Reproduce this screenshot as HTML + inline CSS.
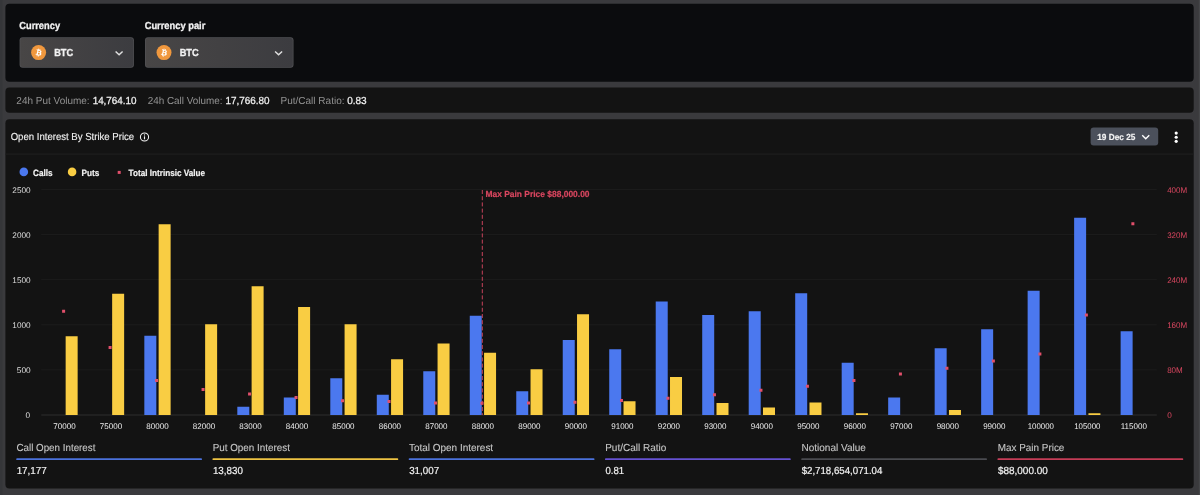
<!DOCTYPE html>
<html><head><meta charset="utf-8"><title>Open Interest By Strike Price</title>
<style>
html,body{margin:0;padding:0;}
body{width:1200px;height:495px;background:#3a3a3d;overflow:hidden;position:relative;font-family:"Liberation Sans",sans-serif;color:#fff;}
#chart{position:absolute;left:0;top:0;}
#txt{position:absolute;left:0;top:0;will-change:transform;text-rendering:geometricPrecision;font-family:"Liberation Sans",sans-serif;}
</style></head><body>
<svg id="bgs" width="1200" height="495" viewBox="0 0 1200 495" style="position:absolute;left:0;top:0">
<defs><linearGradient id="sg" x1="0" y1="0" x2="1" y2="0"><stop offset="0" stop-color="#484646"/><stop offset="1" stop-color="#3c3c40"/></linearGradient></defs>
<rect x="0" y="0" width="2.5" height="495" fill="#353639"/><rect x="1198.8" y="0" width="1.2" height="495" fill="#454649"/>
<rect x="5.4" y="3.7" width="1188.3" height="78" rx="4" fill="#0b0c0e"/>
<rect x="5.4" y="87.6" width="1188.3" height="25.1" rx="4" fill="#131313"/>
<rect x="5.4" y="119.15" width="1188.3" height="369.25" rx="4" fill="#131313"/>
<rect x="5.4" y="153.55" width="1188.3" height="1" fill="#212121"/>
<rect x="19.6" y="37.3" width="114.3" height="30.5" rx="3" fill="#525255"/>
<rect x="20.3" y="38.0" width="112.89999999999999" height="29.1" rx="2.4" fill="url(#sg)"/>
<rect x="145.0" y="37.3" width="148.5" height="30.5" rx="3" fill="#525255"/>
<rect x="145.7" y="38.0" width="147.1" height="29.1" rx="2.4" fill="url(#sg)"/>
<rect x="1090.6" y="127.5" width="67.6" height="18.1" rx="3" fill="#4b505b"/>
<circle cx="1176.2" cy="133.1" r="1.6" fill="#fff"/>
<circle cx="1176.2" cy="137.25" r="1.6" fill="#fff"/>
<circle cx="1176.2" cy="141.3" r="1.6" fill="#fff"/>
<circle cx="23.8" cy="171.9" r="4.3" fill="#4b78ef"/>
<circle cx="72.1" cy="171.9" r="4.3" fill="#f9cd43"/>
<rect x="117.7" y="170.9" width="3" height="3" fill="#e14f6b"/>
<g transform="translate(31.10 45.10) scale(0.4688)"><circle cx="16" cy="16" r="16" fill="#f0983e"/><path fill="#fff" transform="translate(16 16) scale(0.86) translate(-16 -16)" d="M23.19 14.02c.31-2.1-1.28-3.22-3.47-3.97l.71-2.85-1.73-.43-.69 2.77c-.46-.11-.92-.22-1.39-.33l.7-2.79-1.73-.43-.71 2.85c-.38-.09-.75-.17-1.1-.26l-2.39-.6-.46 1.85s1.28.29 1.26.31c.7.18.83.64.8 1.01l-.81 3.24c.05.01.11.03.18.06l-.18-.05-1.13 4.54c-.09.21-.3.53-.79.41.02.03-1.26-.31-1.26-.31l-.86 1.98 2.25.56c.42.1.83.21 1.23.32l-.72 2.88 1.73.43.71-2.85c.47.13.93.25 1.38.36l-.71 2.84 1.73.43.72-2.88c2.96.56 5.18.33 6.11-2.34.75-2.15-.04-3.39-1.59-4.2 1.13-.26 1.98-1 2.21-2.54zm-3.96 5.55c-.53 2.15-4.16.99-5.33.7l.95-3.81c1.18.29 4.94.87 4.38 3.11zm.54-5.58c-.49 1.96-3.5.96-4.48.72l.86-3.46c.98.24 4.13.7 3.62 2.74z"/></g>
<path d="M115.60 51.40 L119.10 54.80 L122.60 51.40" fill="none" stroke="#e0e0e0" stroke-width="1.45"/>
<g transform="translate(156.50 45.10) scale(0.4688)"><circle cx="16" cy="16" r="16" fill="#f0983e"/><path fill="#fff" transform="translate(16 16) scale(0.86) translate(-16 -16)" d="M23.19 14.02c.31-2.1-1.28-3.22-3.47-3.97l.71-2.85-1.73-.43-.69 2.77c-.46-.11-.92-.22-1.39-.33l.7-2.79-1.73-.43-.71 2.85c-.38-.09-.75-.17-1.1-.26l-2.39-.6-.46 1.85s1.28.29 1.26.31c.7.18.83.64.8 1.01l-.81 3.24c.05.01.11.03.18.06l-.18-.05-1.13 4.54c-.09.21-.3.53-.79.41.02.03-1.26-.31-1.26-.31l-.86 1.98 2.25.56c.42.1.83.21 1.23.32l-.72 2.88 1.73.43.71-2.85c.47.13.93.25 1.38.36l-.71 2.84 1.73.43.72-2.88c2.96.56 5.18.33 6.11-2.34.75-2.15-.04-3.39-1.59-4.2 1.13-.26 1.98-1 2.21-2.54zm-3.96 5.55c-.53 2.15-4.16.99-5.33.7l.95-3.81c1.18.29 4.94.87 4.38 3.11zm.54-5.58c-.49 1.96-3.5.96-4.48.72l.86-3.46c.98.24 4.13.7 3.62 2.74z"/></g>
<path d="M275.10 51.40 L278.60 54.80 L282.10 51.40" fill="none" stroke="#e0e0e0" stroke-width="1.45"/>
<path d="M1142.25 135.20 L1145.75 138.70 L1149.25 135.20" fill="none" stroke="#fff" stroke-width="1.4"/>
<circle cx="144.5" cy="137" r="4.1" fill="none" stroke="#f4f4f4" stroke-width="1.05"/><rect x="143.95" y="136.3" width="1.1" height="3" fill="#f4f4f4"/><rect x="143.95" y="134.4" width="1.1" height="1.1" fill="#f4f4f4"/>
</svg>
<svg id="chart" width="1200" height="495" viewBox="0 0 1200 495">
<line x1="41.25" y1="415.00" x2="1156.8" y2="415.00" stroke="#2e2e2e" stroke-width="1"/>
<line x1="41.25" y1="369.88" x2="1156.8" y2="369.88" stroke="#1c1c1c" stroke-width="1"/>
<line x1="41.25" y1="324.76" x2="1156.8" y2="324.76" stroke="#1c1c1c" stroke-width="1"/>
<line x1="41.25" y1="279.64" x2="1156.8" y2="279.64" stroke="#1c1c1c" stroke-width="1"/>
<line x1="41.25" y1="234.52" x2="1156.8" y2="234.52" stroke="#1c1c1c" stroke-width="1"/>
<line x1="41.25" y1="189.40" x2="1156.8" y2="189.40" stroke="#1c1c1c" stroke-width="1"/>
<rect x="65.65" y="336.25" width="12.0" height="78.75" fill="#f9cd43"/>
<rect x="112.14" y="293.75" width="12.0" height="121.25" fill="#f9cd43"/>
<rect x="144.33" y="335.75" width="12.0" height="79.25" fill="#4b78ef"/>
<rect x="158.63" y="224.25" width="12.0" height="190.75" fill="#f9cd43"/>
<rect x="205.12" y="324.25" width="12.0" height="90.75" fill="#f9cd43"/>
<rect x="237.31" y="406.75" width="12.0" height="8.25" fill="#4b78ef"/>
<rect x="251.61" y="286.25" width="12.0" height="128.75" fill="#f9cd43"/>
<rect x="283.80" y="397.50" width="12.0" height="17.50" fill="#4b78ef"/>
<rect x="298.10" y="307.00" width="12.0" height="108.00" fill="#f9cd43"/>
<rect x="330.29" y="378.25" width="12.0" height="36.75" fill="#4b78ef"/>
<rect x="344.58" y="324.25" width="12.0" height="90.75" fill="#f9cd43"/>
<rect x="376.78" y="394.75" width="12.0" height="20.25" fill="#4b78ef"/>
<rect x="391.07" y="359.25" width="12.0" height="55.75" fill="#f9cd43"/>
<rect x="423.27" y="371.25" width="12.0" height="43.75" fill="#4b78ef"/>
<rect x="437.56" y="343.50" width="12.0" height="71.50" fill="#f9cd43"/>
<rect x="469.76" y="315.75" width="12.0" height="99.25" fill="#4b78ef"/>
<rect x="484.06" y="352.75" width="12.0" height="62.25" fill="#f9cd43"/>
<rect x="516.25" y="391.25" width="12.0" height="23.75" fill="#4b78ef"/>
<rect x="530.54" y="369.25" width="12.0" height="45.75" fill="#f9cd43"/>
<rect x="562.74" y="340.00" width="12.0" height="75.00" fill="#4b78ef"/>
<rect x="577.03" y="314.25" width="12.0" height="100.75" fill="#f9cd43"/>
<rect x="609.23" y="349.25" width="12.0" height="65.75" fill="#4b78ef"/>
<rect x="623.52" y="401.25" width="12.0" height="13.75" fill="#f9cd43"/>
<rect x="655.72" y="301.50" width="12.0" height="113.50" fill="#4b78ef"/>
<rect x="670.01" y="377.00" width="12.0" height="38.00" fill="#f9cd43"/>
<rect x="702.21" y="315.00" width="12.0" height="100.00" fill="#4b78ef"/>
<rect x="716.50" y="403.00" width="12.0" height="12.00" fill="#f9cd43"/>
<rect x="748.70" y="311.25" width="12.0" height="103.75" fill="#4b78ef"/>
<rect x="763.00" y="407.50" width="12.0" height="7.50" fill="#f9cd43"/>
<rect x="795.19" y="293.25" width="12.0" height="121.75" fill="#4b78ef"/>
<rect x="809.49" y="402.50" width="12.0" height="12.50" fill="#f9cd43"/>
<rect x="841.68" y="362.75" width="12.0" height="52.25" fill="#4b78ef"/>
<rect x="855.98" y="413.25" width="12.0" height="1.75" fill="#f9cd43"/>
<rect x="888.17" y="397.50" width="12.0" height="17.50" fill="#4b78ef"/>
<rect x="934.66" y="348.25" width="12.0" height="66.75" fill="#4b78ef"/>
<rect x="948.96" y="410.00" width="12.0" height="5.00" fill="#f9cd43"/>
<rect x="981.15" y="329.25" width="12.0" height="85.75" fill="#4b78ef"/>
<rect x="1027.63" y="290.75" width="12.0" height="124.25" fill="#4b78ef"/>
<rect x="1074.12" y="217.75" width="12.0" height="197.25" fill="#4b78ef"/>
<rect x="1088.43" y="413.25" width="12.0" height="1.75" fill="#f9cd43"/>
<rect x="1120.62" y="331.25" width="12.0" height="83.75" fill="#4b78ef"/>
<rect x="62.10" y="309.75" width="3" height="3" fill="#e14f6b"/>
<rect x="108.58" y="346.00" width="3" height="3" fill="#e14f6b"/>
<rect x="155.08" y="379.00" width="3" height="3" fill="#e14f6b"/>
<rect x="201.56" y="388.00" width="3" height="3" fill="#e14f6b"/>
<rect x="248.06" y="392.50" width="3" height="3" fill="#e14f6b"/>
<rect x="294.55" y="396.00" width="3" height="3" fill="#e14f6b"/>
<rect x="341.04" y="399.25" width="3" height="3" fill="#e14f6b"/>
<rect x="387.53" y="400.00" width="3" height="3" fill="#e14f6b"/>
<rect x="434.02" y="401.50" width="3" height="3" fill="#e14f6b"/>
<rect x="480.51" y="401.75" width="3" height="3" fill="#e14f6b"/>
<rect x="527.00" y="401.50" width="3" height="3" fill="#e14f6b"/>
<rect x="573.49" y="400.75" width="3" height="3" fill="#e14f6b"/>
<rect x="619.98" y="399.00" width="3" height="3" fill="#e14f6b"/>
<rect x="666.47" y="396.75" width="3" height="3" fill="#e14f6b"/>
<rect x="712.96" y="393.25" width="3" height="3" fill="#e14f6b"/>
<rect x="759.45" y="388.75" width="3" height="3" fill="#e14f6b"/>
<rect x="805.94" y="384.75" width="3" height="3" fill="#e14f6b"/>
<rect x="852.43" y="379.00" width="3" height="3" fill="#e14f6b"/>
<rect x="898.92" y="372.50" width="3" height="3" fill="#e14f6b"/>
<rect x="945.41" y="366.75" width="3" height="3" fill="#e14f6b"/>
<rect x="991.90" y="359.50" width="3" height="3" fill="#e14f6b"/>
<rect x="1038.38" y="352.50" width="3" height="3" fill="#e14f6b"/>
<rect x="1084.88" y="313.50" width="3" height="3" fill="#e14f6b"/>
<rect x="1131.37" y="222.25" width="3" height="3" fill="#e14f6b"/>
<line x1="482.31" y1="190" x2="482.31" y2="415" stroke="#c9435c" stroke-width="1" stroke-dasharray="4 2.2"/>
<rect x="16.20" y="458.15" width="185.8" height="1.9" rx="0.9" fill="#4b72dc"/>
<rect x="212.45" y="458.15" width="185.8" height="1.9" rx="0.9" fill="#eec343"/>
<rect x="408.70" y="458.15" width="185.8" height="1.9" rx="0.9" fill="#4b72dc"/>
<rect x="604.95" y="458.15" width="185.8" height="1.9" rx="0.9" fill="#6652d2"/>
<rect x="801.20" y="458.15" width="185.8" height="1.9" rx="0.9" fill="#4a4b50"/>
<rect x="997.45" y="458.15" width="185.8" height="1.9" rx="0.9" fill="#c53d57"/>
</svg>
<svg id="txt" width="1200" height="495" viewBox="0 0 1200 495">
<text x="19.25" y="28.60" font-size="10.2" fill="#f2f2f2" textLength="40.80" lengthAdjust="spacingAndGlyphs" font-weight="bold" stroke="#f2f2f2" stroke-width="0.3">Currency</text>
<text x="144.65" y="28.60" font-size="10.2" fill="#f2f2f2" textLength="60.70" lengthAdjust="spacingAndGlyphs" font-weight="bold" stroke="#f2f2f2" stroke-width="0.3">Currency pair</text>
<text x="54.15" y="56.20" font-size="10.2" fill="#f2f2f2" textLength="19.00" lengthAdjust="spacingAndGlyphs" font-weight="bold" stroke="#f2f2f2" stroke-width="0.3">BTC</text>
<text x="179.65" y="56.20" font-size="10.2" fill="#f2f2f2" textLength="19.00" lengthAdjust="spacingAndGlyphs" font-weight="bold" stroke="#f2f2f2" stroke-width="0.3">BTC</text>
<text x="16.35" y="104.20" font-size="10.2" fill="#929292" textLength="73.30" lengthAdjust="spacingAndGlyphs">24h Put Volume:</text>
<text x="92.65" y="104.20" font-size="10.2" fill="#f2f2f2" textLength="43.90" lengthAdjust="spacingAndGlyphs" stroke="#f2f2f2" stroke-width="0.25">14,764.10</text>
<text x="147.65" y="104.20" font-size="10.2" fill="#929292" textLength="74.90" lengthAdjust="spacingAndGlyphs">24h Call Volume:</text>
<text x="225.45" y="104.20" font-size="10.2" fill="#f2f2f2" textLength="44.10" lengthAdjust="spacingAndGlyphs" stroke="#f2f2f2" stroke-width="0.25">17,766.80</text>
<text x="280.45" y="104.20" font-size="10.2" fill="#929292" textLength="64.10" lengthAdjust="spacingAndGlyphs">Put/Call Ratio:</text>
<text x="347.15" y="104.20" font-size="10.2" fill="#f2f2f2" textLength="19.50" lengthAdjust="spacingAndGlyphs" stroke="#f2f2f2" stroke-width="0.25">0.83</text>
<text x="10.65" y="140.30" font-size="10.2" fill="#f2f2f2" textLength="123.50" lengthAdjust="spacingAndGlyphs" stroke="#f2f2f2" stroke-width="0.12">Open Interest By Strike Price</text>
<text x="1097.25" y="139.70" font-size="8.8" fill="#f2f2f2" textLength="38.10" lengthAdjust="spacingAndGlyphs" font-weight="bold" stroke="#f2f2f2" stroke-width="0.2">19 Dec 25</text>
<text x="33.05" y="175.50" font-size="9.2" fill="#f2f2f2" textLength="19.60" lengthAdjust="spacingAndGlyphs" font-weight="bold" stroke="#f2f2f2" stroke-width="0.2">Calls</text>
<text x="81.45" y="175.50" font-size="9.2" fill="#f2f2f2" textLength="17.90" lengthAdjust="spacingAndGlyphs" font-weight="bold" stroke="#f2f2f2" stroke-width="0.2">Puts</text>
<text x="128.55" y="175.50" font-size="9.2" fill="#f2f2f2" textLength="76.60" lengthAdjust="spacingAndGlyphs" font-weight="bold" stroke="#f2f2f2" stroke-width="0.2">Total Intrinsic Value</text>
<text x="485.45" y="196.80" font-size="8.8" fill="#d8465f" textLength="104.10" lengthAdjust="spacingAndGlyphs" font-weight="bold" stroke="#d8465f" stroke-width="0.2">Max Pain Price $88,000.00</text>
<text x="53.35" y="428.80" font-size="8.2" fill="#ececec" textLength="22.30" lengthAdjust="spacingAndGlyphs">70000</text>
<text x="99.84" y="428.80" font-size="8.2" fill="#ececec" textLength="22.30" lengthAdjust="spacingAndGlyphs">75000</text>
<text x="146.33" y="428.80" font-size="8.2" fill="#ececec" textLength="22.30" lengthAdjust="spacingAndGlyphs">80000</text>
<text x="192.81" y="428.80" font-size="8.2" fill="#ececec" textLength="22.30" lengthAdjust="spacingAndGlyphs">82000</text>
<text x="239.31" y="428.80" font-size="8.2" fill="#ececec" textLength="22.30" lengthAdjust="spacingAndGlyphs">83000</text>
<text x="285.80" y="428.80" font-size="8.2" fill="#ececec" textLength="22.30" lengthAdjust="spacingAndGlyphs">84000</text>
<text x="332.28" y="428.80" font-size="8.2" fill="#ececec" textLength="22.30" lengthAdjust="spacingAndGlyphs">85000</text>
<text x="378.77" y="428.80" font-size="8.2" fill="#ececec" textLength="22.30" lengthAdjust="spacingAndGlyphs">86000</text>
<text x="425.26" y="428.80" font-size="8.2" fill="#ececec" textLength="22.30" lengthAdjust="spacingAndGlyphs">87000</text>
<text x="471.75" y="428.80" font-size="8.2" fill="#ececec" textLength="22.30" lengthAdjust="spacingAndGlyphs">88000</text>
<text x="518.25" y="428.80" font-size="8.2" fill="#ececec" textLength="22.30" lengthAdjust="spacingAndGlyphs">89000</text>
<text x="564.74" y="428.80" font-size="8.2" fill="#ececec" textLength="22.30" lengthAdjust="spacingAndGlyphs">90000</text>
<text x="611.23" y="428.80" font-size="8.2" fill="#ececec" textLength="22.30" lengthAdjust="spacingAndGlyphs">91000</text>
<text x="657.72" y="428.80" font-size="8.2" fill="#ececec" textLength="22.30" lengthAdjust="spacingAndGlyphs">92000</text>
<text x="704.21" y="428.80" font-size="8.2" fill="#ececec" textLength="22.30" lengthAdjust="spacingAndGlyphs">93000</text>
<text x="750.70" y="428.80" font-size="8.2" fill="#ececec" textLength="22.30" lengthAdjust="spacingAndGlyphs">94000</text>
<text x="797.19" y="428.80" font-size="8.2" fill="#ececec" textLength="22.30" lengthAdjust="spacingAndGlyphs">95000</text>
<text x="843.68" y="428.80" font-size="8.2" fill="#ececec" textLength="22.30" lengthAdjust="spacingAndGlyphs">96000</text>
<text x="890.17" y="428.80" font-size="8.2" fill="#ececec" textLength="22.30" lengthAdjust="spacingAndGlyphs">97000</text>
<text x="936.66" y="428.80" font-size="8.2" fill="#ececec" textLength="22.30" lengthAdjust="spacingAndGlyphs">98000</text>
<text x="983.15" y="428.80" font-size="8.2" fill="#ececec" textLength="22.30" lengthAdjust="spacingAndGlyphs">99000</text>
<text x="1027.69" y="428.80" font-size="8.2" fill="#ececec" textLength="26.20" lengthAdjust="spacingAndGlyphs">100000</text>
<text x="1074.18" y="428.80" font-size="8.2" fill="#ececec" textLength="26.20" lengthAdjust="spacingAndGlyphs">105000</text>
<text x="1120.67" y="428.80" font-size="8.2" fill="#ececec" textLength="26.20" lengthAdjust="spacingAndGlyphs">115000</text>
<text x="25.55" y="418.40" font-size="8.2" fill="#dedede">0</text>
<text x="16.75" y="373.38" font-size="8.2" fill="#dedede" textLength="13.90" lengthAdjust="spacingAndGlyphs">500</text>
<text x="12.35" y="328.36" font-size="8.2" fill="#dedede" textLength="18.30" lengthAdjust="spacingAndGlyphs">1000</text>
<text x="12.35" y="283.34" font-size="8.2" fill="#dedede" textLength="18.30" lengthAdjust="spacingAndGlyphs">1500</text>
<text x="12.35" y="238.32" font-size="8.2" fill="#dedede" textLength="18.30" lengthAdjust="spacingAndGlyphs">2000</text>
<text x="12.35" y="193.30" font-size="8.2" fill="#dedede" textLength="18.30" lengthAdjust="spacingAndGlyphs">2500</text>
<text x="1167.15" y="418.30" font-size="8.2" fill="#d8465f">0</text>
<text x="1167.15" y="373.20" font-size="8.2" fill="#d8465f" textLength="15.60" lengthAdjust="spacingAndGlyphs">80M</text>
<text x="1167.15" y="328.10" font-size="8.2" fill="#d8465f" textLength="20.00" lengthAdjust="spacingAndGlyphs">160M</text>
<text x="1167.15" y="283.00" font-size="8.2" fill="#d8465f" textLength="20.00" lengthAdjust="spacingAndGlyphs">240M</text>
<text x="1167.15" y="237.90" font-size="8.2" fill="#d8465f" textLength="20.00" lengthAdjust="spacingAndGlyphs">320M</text>
<text x="1167.15" y="192.80" font-size="8.2" fill="#d8465f" textLength="20.00" lengthAdjust="spacingAndGlyphs">400M</text>
<text x="16.45" y="451.30" font-size="10.2" fill="#c6c6c6" textLength="79.00" lengthAdjust="spacingAndGlyphs" stroke="#c6c6c6" stroke-width="0.1">Call Open Interest</text>
<text x="16.65" y="473.80" font-size="10.2" fill="#f2f2f2" textLength="30.10" lengthAdjust="spacingAndGlyphs" stroke="#f2f2f2" stroke-width="0.2">17,177</text>
<text x="212.70" y="451.30" font-size="10.2" fill="#c6c6c6" textLength="77.20" lengthAdjust="spacingAndGlyphs" stroke="#c6c6c6" stroke-width="0.1">Put Open Interest</text>
<text x="212.90" y="473.80" font-size="10.2" fill="#f2f2f2" textLength="29.95" lengthAdjust="spacingAndGlyphs" stroke="#f2f2f2" stroke-width="0.2">13,830</text>
<text x="408.95" y="451.30" font-size="10.2" fill="#c6c6c6" textLength="84.20" lengthAdjust="spacingAndGlyphs" stroke="#c6c6c6" stroke-width="0.1">Total Open Interest</text>
<text x="409.15" y="473.80" font-size="10.2" fill="#f2f2f2" textLength="29.95" lengthAdjust="spacingAndGlyphs" stroke="#f2f2f2" stroke-width="0.2">31,007</text>
<text x="605.20" y="451.30" font-size="10.2" fill="#c6c6c6" textLength="61.20" lengthAdjust="spacingAndGlyphs" stroke="#c6c6c6" stroke-width="0.1">Put/Call Ratio</text>
<text x="605.40" y="473.80" font-size="10.2" fill="#f2f2f2" textLength="18.70" lengthAdjust="spacingAndGlyphs" stroke="#f2f2f2" stroke-width="0.2">0.81</text>
<text x="801.45" y="451.30" font-size="10.2" fill="#c6c6c6" textLength="64.45" lengthAdjust="spacingAndGlyphs" stroke="#c6c6c6" stroke-width="0.1">Notional Value</text>
<text x="801.65" y="473.80" font-size="10.2" fill="#f2f2f2" textLength="80.70" lengthAdjust="spacingAndGlyphs" stroke="#f2f2f2" stroke-width="0.2">$2,718,654,071.04</text>
<text x="997.70" y="451.30" font-size="10.2" fill="#c6c6c6" textLength="66.70" lengthAdjust="spacingAndGlyphs" stroke="#c6c6c6" stroke-width="0.1">Max Pain Price</text>
<text x="997.90" y="473.80" font-size="10.2" fill="#f2f2f2" textLength="49.95" lengthAdjust="spacingAndGlyphs" stroke="#f2f2f2" stroke-width="0.2">$88,000.00</text>
</svg>
</body></html>
